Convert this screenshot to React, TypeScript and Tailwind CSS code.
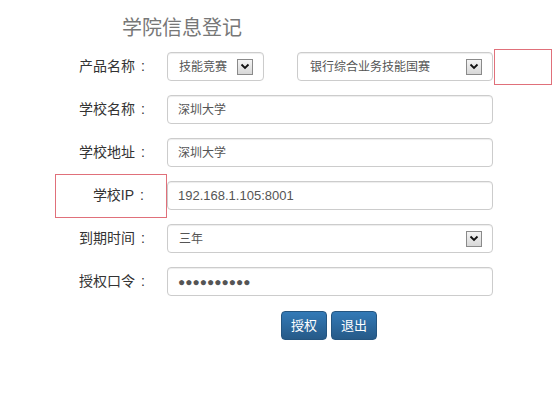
import React from 'react';

const Arrow: React.FC = () => (
  <span className="flex h-[16px] w-[16px] items-center justify-center border border-[#8a8a8a] bg-gradient-to-b from-[#f4f4f4] to-[#d8d8d8]">
    <svg width="10" height="7" viewBox="0 0 10 7">
      <path d="M1.5 1.5 L5 5 L8.5 1.5" fill="none" stroke="#111" strokeWidth="1.8" />
    </svg>
  </span>
);

const box =
  'flex h-[29px] items-center rounded-[4px] border border-[#ccc] bg-white shadow-[inset_0_1px_1px_rgba(0,0,0,0.075)] text-[12px] text-[#555]';

const Row: React.FC<{ label: string; marked?: boolean; children: React.ReactNode }> = ({ label, marked, children }) => (
  <div className="flex h-[43px] items-center">
    <div
      className={
        'ml-[55px] flex h-[44px] w-[112px] shrink-0 items-center justify-end pr-[22px] text-[14px] text-[#333] ' +
        (marked ? 'border border-[#e0707a]' : '')
      }
    >
      {label}
      <span className="ml-[6px]">:</span>
    </div>
    {children}
  </div>
);

const App: React.FC = () => {
  return (
    <div
      className="h-[410px] w-[554px] overflow-hidden bg-white"
      style={{ fontFamily: '"Liberation Sans", "Noto Sans CJK SC", sans-serif' }}
    >
      {/* 标题 */}
      <h1 className="pl-[122px] pt-[15px] text-[20px] leading-[26px] font-normal text-[#777]">学院信息登记</h1>

      <div className="mt-[4px]">
        <Row label="产品名称">
          <div className={box + ' w-[97px] justify-between pl-[11px] pr-[10px]'}>
            <span>技能竞赛</span>
            <Arrow />
          </div>
          <div className={box + ' ml-[33px] w-[196px] justify-between pl-[12px] pr-[10px]'}>
            <span>银行综合业务技能国赛</span>
            <Arrow />
          </div>
          <div className="ml-[1px] h-[36px] w-[58px] border border-[#e0707a]" />
        </Row>

        <Row label="学校名称">
          <div className={box + ' w-[326px] px-[10px]'}>深圳大学</div>
        </Row>

        <Row label="学校地址">
          <div className={box + ' w-[326px] px-[10px]'}>深圳大学</div>
        </Row>

        <Row label="学校IP" marked>
          <div className={box + ' w-[326px] px-[10px] text-[13px]'}>192.168.1.105:8001</div>
        </Row>

        <Row label="到期时间">
          <div className={box + ' w-[326px] justify-between pl-[11px] pr-[10px]'}>
            <span>三年</span>
            <Arrow />
          </div>
        </Row>

        <Row label="授权口令">
          <div className={box + ' w-[326px] px-[10px] text-[10px] text-[#444]'}>●●●●●●●●●●</div>
        </Row>
      </div>

      {/* 按钮 */}
      <div className="ml-[281px] mt-[8px] flex gap-[4px]">
        <button className="h-[29px] w-[46px] rounded-[4px] border border-[#245580] bg-gradient-to-b from-[#337ab7] to-[#265a88] text-[13px] text-white">
          授权
        </button>
        <button className="h-[29px] w-[46px] rounded-[4px] border border-[#245580] bg-gradient-to-b from-[#337ab7] to-[#265a88] text-[13px] text-white">
          退出
        </button>
      </div>
    </div>
  );
};

export default App;
